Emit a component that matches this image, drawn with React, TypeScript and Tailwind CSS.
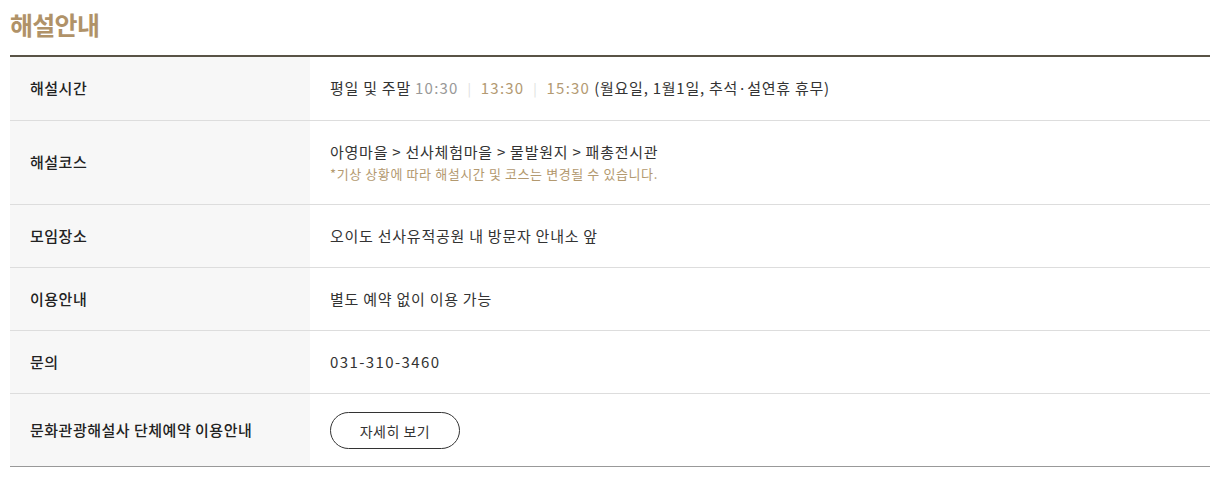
import React from "react";

const font = { fontFamily: '"Noto Sans CJK KR", "Noto Sans", sans-serif' };

function Row({ label, children, last = false, cls = "py-[20px]" }: { label: string; children: React.ReactNode; last?: boolean; cls?: string }) {
  return (
    <div className={`flex ${last ? "" : "border-b border-[#dddddd]"}`}>
      <div className="w-[300px] shrink-0 bg-[#f7f7f7] pl-[20px] flex items-center text-[15px] font-medium text-[#222] tracking-[0.5px]">
        {label}
      </div>
      <div className={`flex-1 pl-[20px] ${cls} flex flex-col justify-center text-[15px] leading-[22px] text-[#333] tracking-[0.75px]`}>
        {children}
      </div>
    </div>
  );
}

export default function App() {
  return (
    <div className="w-[1225px] h-[487px] bg-white" style={font}>
      <div className="px-[10px] pt-[5px]">
        <h2 className="text-[25px] font-bold leading-[38px] text-[#b09268] tracking-[-0.7px]">해설안내</h2>
        <div className="mt-[12px] w-[1200px] border-t-2 border-[#595346] border-b border-b-[#999999]">
          <Row label="해설시간">
            <div>
              평일 및 주말 <span className="text-[#999] tracking-[1.2px]">10:30</span>
              <span className="text-[#ddd] mx-[9px] text-[13px]">|</span>
              <span className="text-[#b39a73] tracking-[1.2px]">13:30</span>
              <span className="text-[#ddd] mx-[9px] text-[13px]">|</span>
              <span className="text-[#b39a73] tracking-[1.2px]">15:30</span> (월요일, 1월1일, 추석·설연휴 휴무)
            </div>
          </Row>
          <Row label="해설코스">
            <div>아영마을 &gt; 선사체험마을 &gt; 물발원지 &gt; 패총전시관</div>
            <div className="text-[13px] leading-[21px] text-[#b3996f] tracking-[0.6px]">*기상 상황에 따라 해설시간 및 코스는 변경될 수 있습니다.</div>
          </Row>
          <Row label="모임장소">
            <div>오이도 선사유적공원 내 방문자 안내소 앞</div>
          </Row>
          <Row label="이용안내">
            <div>별도 예약 없이 이용 가능</div>
          </Row>
          <Row label="문의">
            <div className="tracking-[1.4px]">031-310-3460</div>
          </Row>
          <Row label="문화관광해설사 단체예약 이용안내" last cls="pt-[18px] pb-[17px]">
            <div>
              <button className="w-[130px] h-[37px] rounded-full border border-[#333] text-[14px] text-[#333] bg-white flex items-center justify-center tracking-[0.5px]">
                자세히 보기
              </button>
            </div>
          </Row>
        </div>
      </div>
    </div>
  );
}
